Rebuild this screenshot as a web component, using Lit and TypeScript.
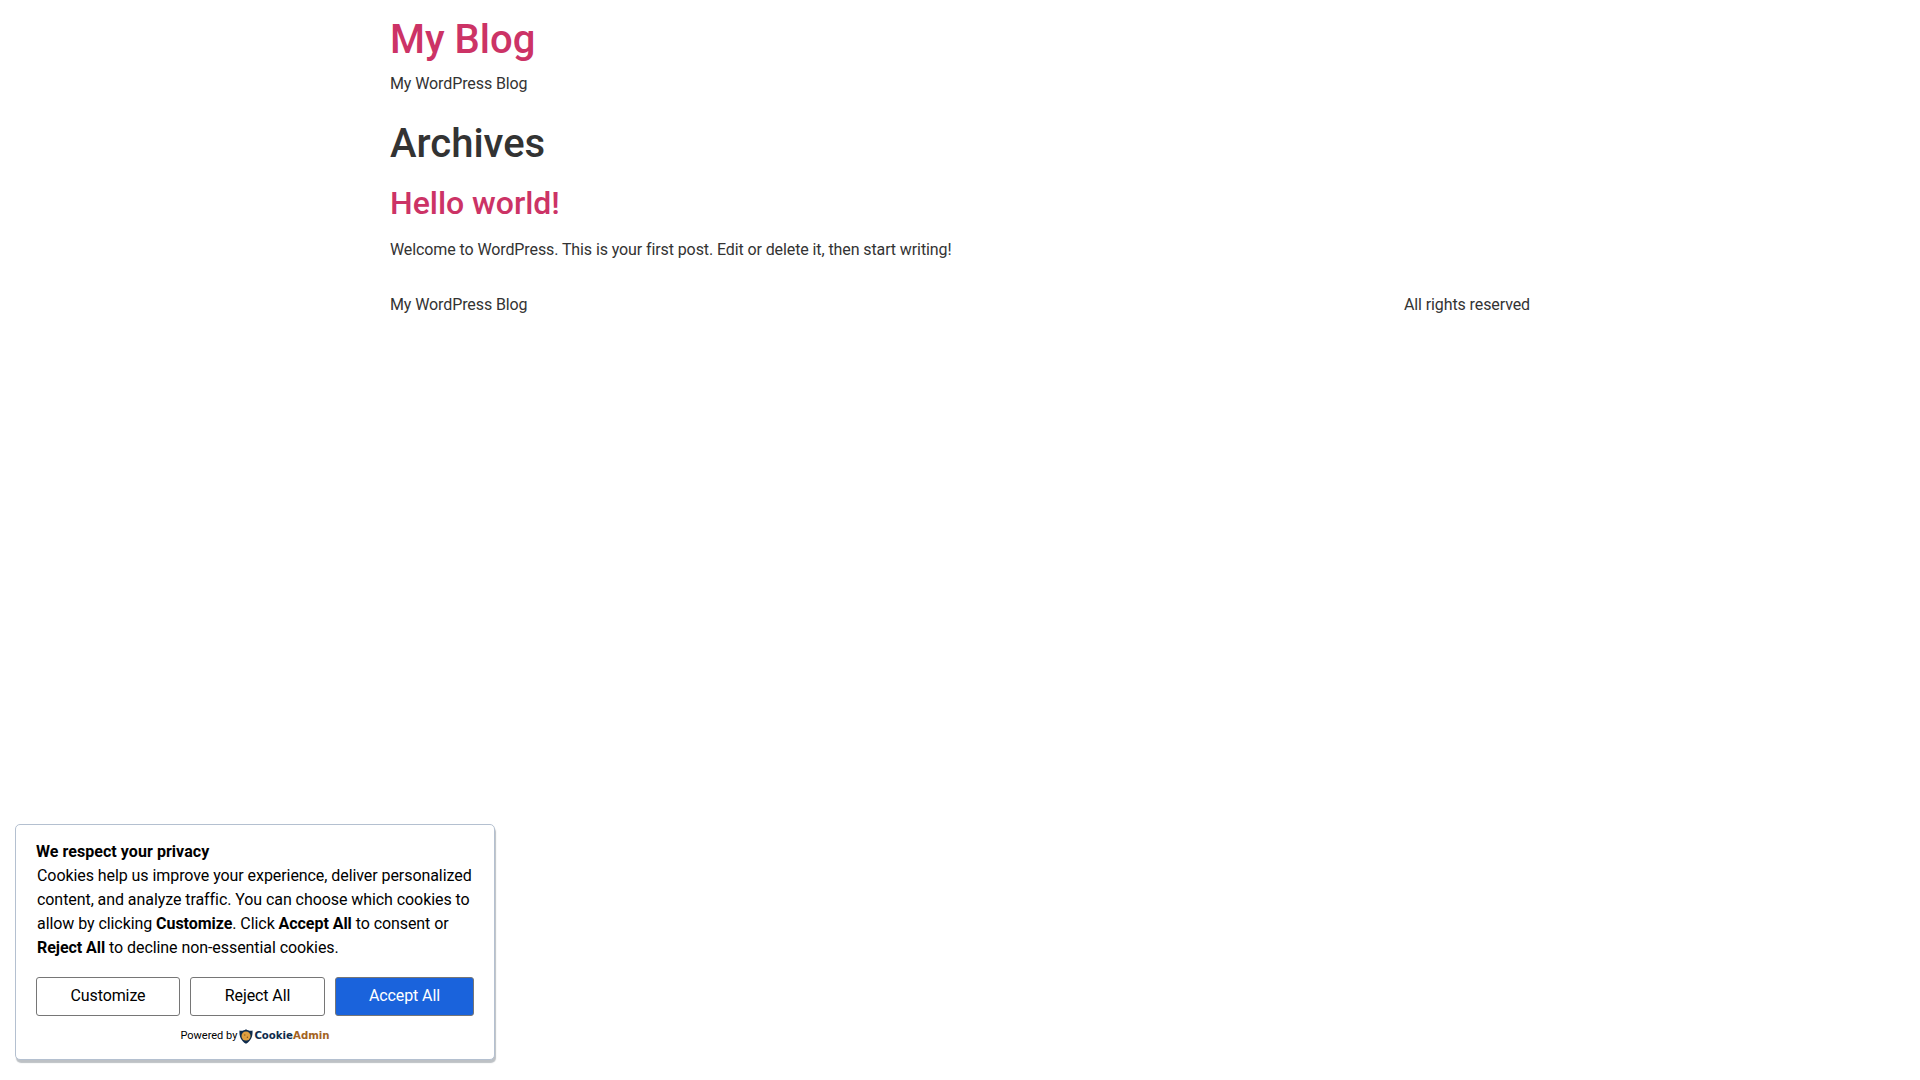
import { LitElement, html, css } from "lit";
import { customElement } from "lit/decorators.js";

@customElement("app-root")
export class AppRoot extends LitElement {
  static styles = css`
    :host { display: block; min-height: 1080px; background: #fff; color: #333; font-family: Roboto, "Liberation Sans", sans-serif; font-size: 16px; line-height: 1.5; position: relative; letter-spacing: -0.1px; }
    .wrap { width: 1140px; margin: 0 auto; }
    header { padding-block: 16px; }
    h1, h2, p { margin: 0; letter-spacing: 0; }
    p { letter-spacing: -0.1px; }
    h1 { font-size: 40px; line-height: 1.2; font-weight: 500; }
    h2 { font-size: 32px; line-height: 1.2; font-weight: 500; letter-spacing: -0.03px; }
    a { color: #c36; text-decoration: none; }
    .brand { margin-bottom: 8px; }
    .title { padding-top: 8px; margin-bottom: 16px; }
    .post h2 { margin-bottom: 8px; }
    .excerpt { margin-top: 16px; margin-bottom: 15px; }
    footer { display: flex; justify-content: space-between; padding-block: 16px; }
    .cookie { position: absolute; left: 15px; top: 824px; width: 480px; height: 236px; box-sizing: border-box; background: #fff; border: 1px solid #b4c0d0; border-radius: 5px; box-shadow: 1px 3px 1px rgba(90,100,110,.4); padding: 15px 20px 0; color: #000; }
    .cookie .head { font-weight: 700; font-size: 16px; line-height: 24px; letter-spacing: 0.05px; }
    .cookie .body { padding-left: 1px; line-height: 24px; font-size: 16px; letter-spacing: -0.07px; }
    .cookie .body b { letter-spacing: -0.05px; }
    .btns { display: flex; gap: 10px; margin-top: 17px; }
    button { font: inherit; letter-spacing: -0.1px; height: 39px; box-sizing: border-box; border: 1px solid #767676; border-radius: 3px; background: #fff; color: #000; padding: 0 0 2px; }
    .customize { width: 144px; }
    .reject { width: 135px; }
    .accept { width: 139px; background: #1a63dc; color: #fff; }
    .powered { display: flex; align-items: center; justify-content: center; gap: 2px; font-size: 11px; line-height: 16px; margin-top: 12px; color: #000; letter-spacing: 0; }
    .logo { display: inline-flex; align-items: center; font-family: "DejaVu Sans", sans-serif; font-size: 10.2px; font-weight: 700; letter-spacing: 0; }
    .logo svg { width: 14px; height: 15px; margin-right: 1px; }
    .ck { color: #0f2c4d; }
    .ad { color: #a3621e; }
  `;

  render() {
    return html`
      <div class="wrap">
        <header>
          <h1 class="brand"><a href="#">My Blog</a></h1>
          <p>My WordPress Blog</p>
        </header>
        <main>
          <div class="title"><h1>Archives</h1></div>
          <article class="post">
            <h2><a href="#">Hello world!</a></h2>
            <p class="excerpt">Welcome to WordPress. This is your first post. Edit or delete it, then start writing!</p>
          </article>
        </main>
        <footer><span>My WordPress Blog</span><span>All rights reserved</span></footer>
      </div>
      <div class="cookie">
        <div class="head">We respect your privacy</div>
        <div class="body">Cookies help us improve your experience, deliver personalized content, and analyze traffic. You can choose which cookies to allow by clicking <b>Customize</b>. Click <b>Accept All</b> to consent or <b>Reject All</b> to decline non-essential cookies.</div>
        <div class="btns">
          <button class="customize">Customize</button>
          <button class="reject">Reject All</button>
          <button class="accept">Accept All</button>
        </div>
        <div class="powered">
          <span>Powered by</span>
          <span class="logo">
            <svg viewBox="0 0 14 15"><path d="M.5 1.5 C3 2 5 1.5 7 .2 C9 1.5 11 2 13.5 1.5 C14 7 12 12 7 14.8 C2 12 0 7 .5 1.5Z" fill="#0f2c4d"/><circle cx="7" cy="7" r="4.5" fill="#e0a040"/><circle cx="5.8" cy="6" r=".7" fill="#8a5a1a"/><circle cx="8.4" cy="8.2" r=".7" fill="#8a5a1a"/></svg>
            <span class="ck">Cookie</span><span class="ad">Admin</span>
          </span>
        </div>
      </div>
    `;
  }
}
